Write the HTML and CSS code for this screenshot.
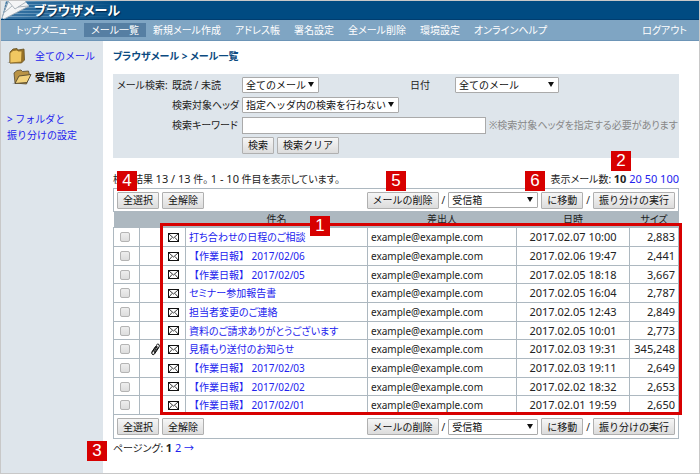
FILE: index.html
```
<!DOCTYPE html>
<html lang="ja">
<head>
    <meta charset="UTF-8">
    <meta name="viewport" content="width=device-width, initial-scale=1.0">
    <title>ブラウザメール</title>
    <link rel="stylesheet" href="styles.css">
</head>
<body>
    <!-- shared icons -->
    <svg class="sprite" aria-hidden="true">
        <symbol id="mail" viewBox="0 0 11 9">
            <rect x="0.5" y="0.5" width="10" height="8" fill="#fff" stroke="#111"/>
            <path d="M1 1l4.500 4L10 1M1 8l3-3.500M10 8l-3-3.500" fill="none" stroke="#222" stroke-width=".9"/>
        </symbol>
        <symbol id="clip" viewBox="0 0 10 14">
            <path d="M2 10.500L6.500 4M4 11.500L8.500 5" stroke="#222" stroke-width="1.200" fill="none"/>
            <path d="M6 3.500q2-2.500 3-1t-.5 3.500l-4 6q-1.500 1.500-2.500 0t.5-3l3-4.500q1.500-1 1.500 0l-3 5.500" fill="none" stroke="#111" stroke-width="1"/>
        </symbol>
    </svg>

    <header class="header">
        <svg class="logo" viewBox="0 0 30 19" aria-hidden="true">
            <path d="M0 0h5L1 17 0 18z" fill="#e3e7ea"/>
            <path d="M8 0h16l4 5L3 18 1 17z" fill="#f4f5f6"/>
            <path d="M7 0L1 17M8 1l6 7 11-7M4 11l7-6M17 6l10-1M28 5L3 18" fill="none" stroke="#a3adb6" stroke-width=".9"/>
        </svg>
        <h1>ブラウザメール</h1>
    </header>
    <nav class="nav">
        <a href="#">トップメニュー</a>
        <a href="#" class="active">メール一覧</a>
        <a href="#">新規メール作成</a>
        <a href="#">アドレス帳</a>
        <a href="#">署名設定</a>
        <a href="#">全メール削除</a>
        <a href="#">環境設定</a>
        <a href="#">オンラインヘルプ</a>
        <a href="#" class="logout">ログアウト</a>
    </nav>

    <div class="page">
        <aside class="sidebar">
            <a href="#" class="folder">
                <svg viewBox="0 0 20 16" aria-hidden="true">
                    <path d="M0 15l4-2v2z" fill="#aab0b8"/>
                    <path d="M3 4l3-3 4-.5 1 1.500 6-1 .5 11-3 3L3 15z" fill="#9a7427" stroke="#665025" stroke-width=".8"/>
                    <path d="M3 5l3-2.500 4-.5 1 1h4l-.5 11L3 15z" fill="#f0c761" stroke="#8b6a28" stroke-width=".8"/>
                </svg>
                全てのメール
            </a>
            <a href="#" class="folder current">
                <svg viewBox="0 0 20 16" aria-hidden="true">
                    <path d="M0 15l4-2v2z" fill="#aab0b8"/>
                    <path d="M3 14L2 4l3-2.500 4-.5 1.500 1.500 6-.5 1 4-3 9z" fill="#b99345" stroke="#54472c" stroke-width=".8"/>
                    <path d="M3 14.500L7 7l12-1.500-4 8z" fill="#f2d27c" stroke="#54472c" stroke-width=".9"/>
                </svg>
                受信箱
            </a>
            <a href="#" class="folder-settings">&gt; フォルダと<br>振り分けの設定</a>
        </aside>

        <main class="main">
            <h2>ブラウザメール &gt; メール一覧</h2>

            <form class="search">
                <span>メール検索:</span>
                <label for="read">既読 / 未読</label>
                <div class="line">
                    <span class="select"><select id="read"><option>全てのメール</option></select></span>
                    <label for="date" class="date-label">日付</label>
                    <span class="select wide"><select id="date"><option>全てのメール</option></select></span>
                </div>
                <label for="head">検索対象ヘッダ</label>
                <div class="line">
                    <span class="select"><select id="head"><option>指定ヘッダ内の検索を行わない</option></select></span>
                </div>
                <label for="keyword">検索キーワード</label>
                <div class="line">
                    <input type="text" id="keyword">
                    <span class="note">※検索対象ヘッダを指定する必要があります</span>
                </div>
                <div class="line buttons">
                    <button type="button">検索</button>
                    <button type="button">検索クリア</button>
                </div>
            </form>

            <div class="summary">
                <span>検索結果 <span class="num">13 / 13</span> 件。 <span class="num">1 - 10</span> 件目を表示しています。</span>
                <span>表示メール数: <span class="num"><b>10</b> <a href="#">20</a> <a href="#">50</a> <a href="#">100</a></span></span>
                <i class="badge b2">2</i>
                <i class="badge b4">4</i>
                <i class="badge b5">5</i>
                <i class="badge b6">6</i>
            </div>

            <div class="toolbar">
                <button type="button">全選択</button>
                <button type="button">全解除</button>
                <button type="button" class="push">メールの削除</button>
                <span>/</span>
                <span class="select box"><select aria-label="移動先"><option>受信箱</option></select></span>
                <button type="button">に移動</button>
                <span>/</span>
                <button type="button">振り分けの実行</button>
            </div>

            <div class="list">
                <table>
                    <colgroup>
                        <col class="c-check"><col class="c-clip"><col class="c-mail"><col><col class="c-from"><col class="c-date"><col class="c-size">
                    </colgroup>
                    <thead>
                        <tr><th></th><th></th><th></th><th>件名</th><th>差出人</th><th>日時</th><th>サイズ</th></tr>
                    </thead>
                    <tbody id="rows"></tbody>
                </table>
                <div class="frame"></div>
                <i class="badge b1">1</i>
            </div>

            <div class="toolbar bottom">
                <button type="button">全選択</button>
                <button type="button">全解除</button>
                <button type="button" class="push">メールの削除</button>
                <span>/</span>
                <span class="select box"><select aria-label="移動先"><option>受信箱</option></select></span>
                <button type="button">に移動</button>
                <span>/</span>
                <button type="button">振り分けの実行</button>
            </div>

            <div class="paging">
                ページング: <span class="num"><b>1</b> <a href="#">2</a></span> <a href="#">→</a>
                <i class="badge b3">3</i>
            </div>
        </main>
    </div>

    <script src="script.js"></script>
</body>
</html>
```
FILE: styles.css
```
* {
    box-sizing: border-box;
}
body {
    margin: 0;
    min-height: 100vh;
    display: flex;
    flex-direction: column;
    border: 1px solid #c8c8c8;
    background-color: #fff;
    color: #222;
    font-family: "Noto Sans", "Noto Sans CJK JP", sans-serif;
    font-size: 10px;
    line-height: 16px;
    font-feature-settings: "palt";
}
a {
    color: #2222ee;
    text-decoration: none;
}
h1, h2 {
    margin: 0;
}
.sprite {
    position: absolute;
    width: 0;
    height: 0;
}
.num {
    font-size: 11px;
}

/* Header */
.header {
    display: flex;
    align-items: center;
    height: 19px;
    background:
        linear-gradient(90deg, transparent, #004b82 120px),
        repeating-linear-gradient(#7fa9c9 0 1px, #3c77a6 1px 3px);
    border-bottom: 1px solid #003d70;
}
.logo {
    width: 30px;
    height: 19px;
    margin-right: 3px;
}
.header h1 {
    color: #fff;
    font-size: 13px;
    text-shadow: 1px 1px 1px #00294d;
}
.nav {
    display: flex;
    align-items: center;
    height: 21px;
    padding: 0 5px 0 8px;
    background-color: #7fa5c3;
    border-bottom: 1px solid #6d95b7;
}
.nav a {
    padding: 0 7px;
    line-height: 14px;
    color: #fff;
}
.nav .active {
    background-color: #567fa3;
}
.nav .logout {
    margin-left: auto;
}

.page {
    flex: 1;
    display: flex;
}

/* Sidebar */
.sidebar {
    width: 102px;
    flex-shrink: 0;
    padding: 4px 6px;
    background-color: #dee5eb;
    font-feature-settings: normal;
}
.folder {
    display: flex;
    align-items: center;
    height: 21px;
}
.folder svg {
    width: 20px;
    height: 16px;
    margin-right: 8px;
}
.folder.current {
    color: #111;
    font-weight: bold;
}
.folder.current svg {
    margin-left: 5px;
    margin-right: 3px;
}
.folder-settings {
    display: block;
    margin-top: 24px;
}

/* Main area */
.main {
    flex: 1;
    min-width: 0;
    padding: 7px 20px 0 10px;
}
h2 {
    margin-bottom: 10px;
    color: #0b4a80;
    font-size: 10px;
}
.search {
    display: grid;
    grid-template-columns: 55px 70px 1fr;
    grid-auto-rows: 16px;
    row-gap: 4px;
    align-items: center;
    height: 84px;
    padding: 3px 0 3px 4px;
    background-color: #dee5eb;
}
.search > label {
    grid-column: 2;
}
.search .buttons {
    grid-column: 3;
}
.line {
    display: flex;
    align-items: center;
    gap: 3px;
    white-space: nowrap;
}
.date-label {
    width: 42px;
    margin-left: 88px;
}
.note {
    color: #888;
}

/* Controls */
button, select, input {
    font-family: inherit;
    font-size: 10px;
    color: #111;
    font-feature-settings: normal;
}
button {
    height: 17px;
    padding: 0 5px;
    border: 1px solid #b0b0b0;
    border-radius: 1px;
    background: linear-gradient(#f6f6f6, #dcdcdc);
    line-height: 14px;
}
.select {
    position: relative;
    display: inline-flex;
}
.select::after {
    content: "";
    position: absolute;
    right: 5px;
    top: 5px;
    border: 3px solid transparent;
    border-top: 5px solid #111;
    border-bottom: 0;
    pointer-events: none;
}
select {
    appearance: none;
    height: 16px;
    padding: 0 12px 0 3px;
    border: 1px solid #aaa;
    border-radius: 1px;
    background-color: #fff;
    line-height: 14px;
}
.wide select {
    width: 104px;
}
.box select {
    width: 90px;
}
input[type="text"] {
    width: 244px;
    height: 17px;
    border: 1px solid #aaa;
}
input[type="checkbox"] {
    appearance: none;
    display: block;
    width: 10px;
    height: 10px;
    margin: 0 0 0 6px;
    border: 1px solid #b4b4b4;
    border-radius: 2px;
    background: linear-gradient(#eee, #ddd);
}

/* Mail list */
.summary {
    position: relative;
    display: flex;
    justify-content: space-between;
    margin-top: 13px;
    padding-bottom: 1px;
}
.toolbar {
    display: flex;
    align-items: center;
    gap: 3px;
    height: 24px;
    padding: 0 3px;
    border: 1px solid #adb8c0;
}
.toolbar.bottom {
    border-top: 0;
}
.toolbar .push {
    margin-left: auto;
}
.list {
    position: relative;
}
table {
    width: 100%;
    table-layout: fixed;
    border-collapse: collapse;
}
th {
    height: 15px;
    padding: 0;
    background-color: #adb8c0;
    font-weight: normal;
    line-height: 15px;
}
td {
    height: 19px;
    padding: 0 3px;
    border: 1px solid #adb8c0;
    line-height: 16px;
    white-space: nowrap;
}
tr:nth-child(3n) td {
    height: 18px;
}
td:nth-child(1), td:nth-child(2) {
    padding: 0;
}
td svg {
    display: block;
    margin: 0 auto;
}
.i-mail {
    width: 11px;
    height: 9px;
}
.i-clip {
    width: 10px;
    height: 14px;
    margin-right: 1px;
}
.report {
    font-feature-settings: normal;
}
.date, .size {
    font-size: 11px;
    text-align: center;
}
.size {
    text-align: right;
}
.c-check {
    width: 26px;
}
.c-clip {
    width: 22px;
}
.c-mail {
    width: 24px;
}
.c-from {
    width: 149px;
}
.c-date {
    width: 113px;
}
.c-size {
    width: 49px;
}
.paging {
    position: relative;
    margin-top: 1px;
}

/* Numbered callouts */
.frame {
    position: absolute;
    top: 11px;
    left: 47px;
    right: -3px;
    bottom: 0;
    border: 3px solid #d70000;
    pointer-events: none;
}
.badge {
    position: absolute;
    width: 20px;
    height: 20px;
    background-color: #d70000;
    color: #fff;
    font-family: "Liberation Sans", sans-serif;
    font-size: 17px;
    font-style: normal;
    line-height: 20px;
    text-align: center;
}
.b1 {
    top: 4px;
    left: 197px;
}
.b2 {
    top: -20px;
    right: 48px;
}
.b3 {
    top: 1px;
    left: -26px;
}
.b4 {
    top: 0;
    left: 4px;
}
.b5 {
    top: 0;
    left: 273px;
}
.b6 {
    top: 0;
    right: 134px;
}
```
FILE: script.js
```
const mails = [
    ["打ち合わせの日程のご相談", "2017.02.07 10:00", "2,883"],
    ["【作業日報】 2017/02/06", "2017.02.06 19:47", "2,441"],
    ["【作業日報】 2017/02/05", "2017.02.05 18:18", "3,667"],
    ["セミナー参加報告書", "2017.02.05 16:04", "2,787"],
    ["担当者変更のご連絡", "2017.02.05 12:43", "2,849"],
    ["資料のご請求ありがとうございます", "2017.02.05 10:01", "2,773"],
    ["見積もり送付のお知らせ", "2017.02.03 19:31", "345,248", true],
    ["【作業日報】 2017/02/03", "2017.02.03 19:11", "2,649"],
    ["【作業日報】 2017/02/02", "2017.02.02 18:32", "2,653"],
    ["【作業日報】 2017/02/01", "2017.02.01 19:59", "2,650"]
];

document.getElementById('rows').innerHTML = mails.map(([subject, date, size, clip]) => `
    <tr>
        <td><input type="checkbox" aria-label="${subject}"></td>
        <td>${clip ? '<svg class="i-clip"><use href="#clip"/></svg>' : ''}</td>
        <td><svg class="i-mail"><use href="#mail"/></svg></td>
        <td><a href="#" class="${subject.startsWith('【') ? 'report' : 'subject'}">${subject}</a></td>
        <td>example@example.com</td>
        <td class="date">${date}</td>
        <td class="size">${size}</td>
    </tr>`).join('');
```
